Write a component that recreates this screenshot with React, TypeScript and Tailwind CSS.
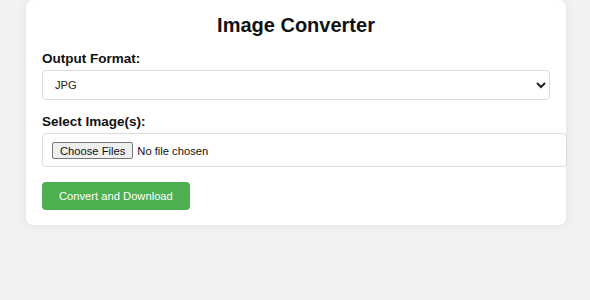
import React, { useState } from "react";

const App = () => {
  const [format, setFormat] = useState("jpg");
  const [files, setFiles] = useState<FileList | null>(null);

  const convert = (e: React.FormEvent) => {
    e.preventDefault();
    // nothing to convert in the sandbox
    console.log("convert", format, files);
  };

  return (
    <div
      className="min-h-screen bg-[#f2f2f2]"
      style={{ fontFamily: '"Liberation Sans", Arial, sans-serif' }}
    >
      <div className="ml-[26px] w-[540px] bg-white rounded-[7px] shadow-[0_0_8px_rgba(0,0,0,0.08)] px-[16px] pt-[13px] pb-[15px]">
        <h2 className="text-center text-[20px] leading-[24px] font-bold text-[#111]">
          Image Converter
        </h2>
        <form onSubmit={convert}>
          <label className="block mt-[14px] text-[13.5px] leading-[16px] font-bold text-[#111]">
            Output Format:
          </label>
          <select
            value={format}
            onChange={(e) => setFormat(e.target.value)}
            className="block mt-[3px] w-full h-[30px] px-[8px] border border-[#dcdcdc] rounded-[4px] text-[11.2px] text-[#222] bg-white"
          >
            <option value="jpg">JPG</option>
            <option value="png">PNG</option>
            <option value="webp">WEBP</option>
          </select>

          <label className="block mt-[14px] text-[13.5px] leading-[16px] font-bold text-[#111]">
            Select Image(s):
          </label>
          <input
            type="file"
            multiple
            accept="image/*"
            onChange={(e) => setFiles(e.target.files)}
            className="block mt-[3px] w-[525px] h-[34px] px-[9px] py-[8px] border border-[#dcdcdc] rounded-[4px] text-[11.2px] leading-[16px] text-[#111] file:mr-[4px] file:px-[7px] file:h-[17px] file:bg-[#efefef] file:border file:border-[#767676] file:rounded-[2px] file:text-[#111]"
          />

          <button
            type="submit"
            className="mt-[15px] h-[28px] px-[17px] bg-[#4caf50] text-white text-[11.2px] rounded-[4px]"
          >
            Convert and Download
          </button>
        </form>
      </div>
    </div>
  );
};

export default App;
